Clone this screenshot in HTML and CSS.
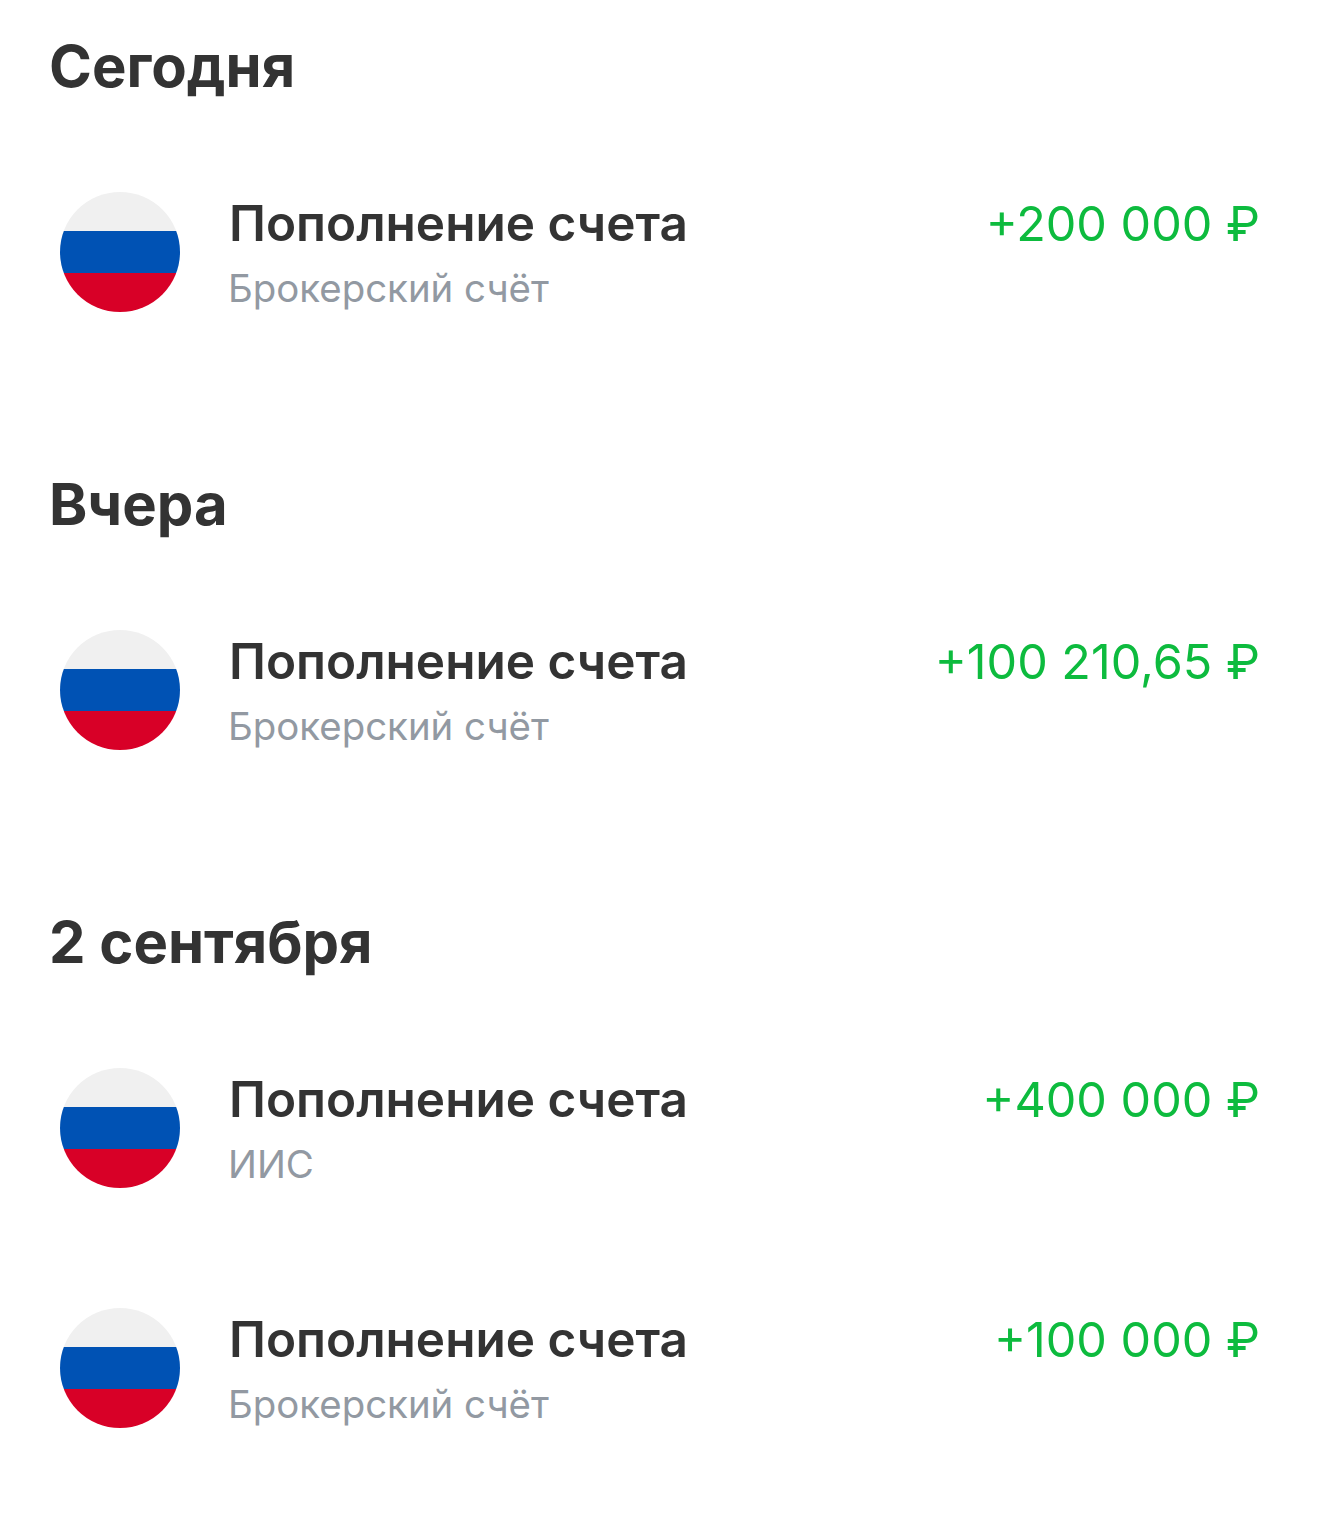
FILE: index.html
```html
<!DOCTYPE html>
<html lang="ru">
<head>
  <meta charset="utf-8" />
  <title>Операции</title>
  <link rel="stylesheet" href="styles.css">
</head>
<body>
  <main>
    <section class="day">
      <h2>Сегодня</h2>
      <div class="op">
        <svg class="flag" viewBox="0 0 120 120"><clipPath id="c1"><circle cx="60" cy="60" r="60"/></clipPath><g clip-path="url(#c1)"><rect width="120" height="40" fill="#f0f0f0"/><rect y="39" width="120" height="42" fill="#0052b4"/><rect y="81" width="120" height="39" fill="#d80027"/></g></svg>
        <div class="op-text">
          <div class="op-title">Пополнение счета</div>
          <div class="op-sub">Брокерский счёт</div>
        </div>
        <div class="op-sum">+200 000 ₽</div>
      </div>
    </section>
    <section class="day">
      <h2>Вчера</h2>
      <div class="op">
        <svg class="flag" viewBox="0 0 120 120"><g clip-path="url(#c1)"><rect width="120" height="40" fill="#f0f0f0"/><rect y="39" width="120" height="42" fill="#0052b4"/><rect y="81" width="120" height="39" fill="#d80027"/></g></svg>
        <div class="op-text">
          <div class="op-title">Пополнение счета</div>
          <div class="op-sub">Брокерский счёт</div>
        </div>
        <div class="op-sum">+100 210,65 ₽</div>
      </div>
    </section>
    <section class="day">
      <h2>2 сентября</h2>
      <div class="op">
        <svg class="flag" viewBox="0 0 120 120"><g clip-path="url(#c1)"><rect width="120" height="40" fill="#f0f0f0"/><rect y="39" width="120" height="42" fill="#0052b4"/><rect y="81" width="120" height="39" fill="#d80027"/></g></svg>
        <div class="op-text">
          <div class="op-title">Пополнение счета</div>
          <div class="op-sub">ИИС</div>
        </div>
        <div class="op-sum">+400 000 ₽</div>
      </div>
      <div class="op">
        <svg class="flag" viewBox="0 0 120 120"><g clip-path="url(#c1)"><rect width="120" height="40" fill="#f0f0f0"/><rect y="39" width="120" height="42" fill="#0052b4"/><rect y="81" width="120" height="39" fill="#d80027"/></g></svg>
        <div class="op-text">
          <div class="op-title">Пополнение счета</div>
          <div class="op-sub">Брокерский счёт</div>
        </div>
        <div class="op-sum">+100 000 ₽</div>
      </div>
    </section>
  </main>
</body>
</html>
```

FILE: styles.css
```css
body {
  margin: 0;
  background: #fff;
  font-family: Inter, "Noto Sans", sans-serif;
  color: #333;
}
main {
  padding: 31px 60px 0 49px;
}
.day {
  margin-bottom: 157px;
}
h2 {
  margin: 0 0 91px;
  font-size: 58px;
  line-height: 70px;
  font-weight: 700;
}
.op {
  display: flex;
  align-items: flex-start;
  padding-left: 11px;
  margin-bottom: 120px;
}
.op:last-child {
  margin-bottom: 0;
}
.flag {
  width: 120px;
  height: 120px;
  flex: none;
  margin-right: 49px;
}
.op-text {
  flex: 1;
  padding-top: 1px;
}
.op-title {
  font-size: 49.5px;
  line-height: 60px;
  font-weight: 600;
}
.op-sub {
  margin: 11px 0 0 -1px;
  font-size: 38.4px;
  line-height: 48px;
  color: #9299a2;
}
.op-sum {
  padding-top: 2px;
  font-size: 48.5px;
  line-height: 60px;
  color: #0dbb3e;
}
```
